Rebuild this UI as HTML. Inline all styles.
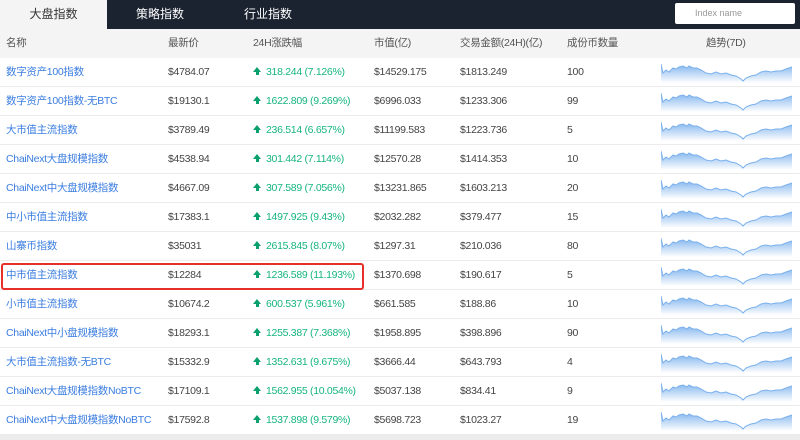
<!DOCTYPE html>
<html><head><meta charset="utf-8"><style>
*{margin:0;padding:0;box-sizing:border-box}
body{width:800px;height:440px;overflow:hidden;background:#fff;font-family:"Liberation Sans","Noto Sans CJK SC",sans-serif;font-size:10.5px;letter-spacing:-0.3px;color:#444;position:relative}
.top{position:absolute;left:0;top:0;width:800px;height:29px;background:#1b2230}
.tab{position:absolute;top:0;height:29px;line-height:29px;font-size:12px;letter-spacing:0;color:#fff;text-align:center}
.tab.act{background:#f4f4f4;color:#333;left:0;width:107px}
.search{position:absolute;left:675px;top:3px;width:120px;height:21px;background:#fff;border-radius:2px;color:#999;font-size:9px;letter-spacing:0;line-height:21px;padding-left:20px}
.hdr{position:absolute;left:0;top:29px;width:800px;height:29px;background:#f4f4f4;color:#555}
.row{position:absolute;left:0;width:800px;height:29px;border-bottom:1px solid #ebebeb}
.c{position:absolute;top:0;line-height:29px;white-space:nowrap}
.n{color:#3a7de0}
.g{color:#16b57f}
.g b{display:inline-block;width:0;height:0;border-left:4px solid transparent;border-right:4px solid transparent;border-bottom:5px solid #0aa06e;position:relative;top:-3px;margin-right:5px}
.g b:after{content:"";position:absolute;left:-1.5px;top:4px;width:3px;height:4px;background:#0aa06e}
svg{position:absolute;left:661px;top:5px}
.red{position:absolute;left:1px;top:263px;width:363px;height:27px;border:2px solid #e8302a;border-radius:3px}
.sb{position:absolute;left:0;top:435px;width:800px;height:5px;background:#ececec}
</style></head><body>
<div class="top"></div>
<div class="tab act">大盘指数</div>
<div class="tab" style="left:110px;width:100px">策略指数</div>
<div class="tab" style="left:218px;width:100px">行业指数</div>
<div class="search">Index name</div>
<div class="hdr">
<div class="c" style="left:6px">名称</div>
<div class="c" style="left:168px">最新价</div>
<div class="c" style="left:253px">24H涨跌幅</div>
<div class="c" style="left:374px">市值(亿)</div>
<div class="c" style="left:460px">交易金额(24H)(亿)</div>
<div class="c" style="left:567px">成份币数量</div>
<div class="c" style="left:706px">趋势(7D)</div>
</div>
<div id="rows"></div>
<div class="red"></div>
<div class="sb"></div>
<script>
var d=[["数字资产100指数","$4784.07","318.244 (7.126%)","$14529.175","$1813.249","100"],
["数字资产100指数-无BTC","$19130.1","1622.809 (9.269%)","$6996.033","$1233.306","99"],
["大市值主流指数","$3789.49","236.514 (6.657%)","$11199.583","$1223.736","5"],
["ChaiNext大盘规模指数","$4538.94","301.442 (7.114%)","$12570.28","$1414.353","10"],
["ChaiNext中大盘规模指数","$4667.09","307.589 (7.056%)","$13231.865","$1603.213","20"],
["中小市值主流指数","$17383.1","1497.925 (9.43%)","$2032.282","$379.477","15"],
["山寨币指数","$35031","2615.845 (8.07%)","$1297.31","$210.036","80"],
["中市值主流指数","$12284","1236.589 (11.193%)","$1370.698","$190.617","5"],
["小市值主流指数","$10674.2","600.537 (5.961%)","$661.585","$188.86","10"],
["ChaiNext中小盘规模指数","$18293.1","1255.387 (7.368%)","$1958.895","$398.896","90"],
["大市值主流指数-无BTC","$15332.9","1352.631 (9.675%)","$3666.44","$643.793","4"],
["ChaiNext大盘规模指数NoBTC","$17109.1","1562.955 (10.054%)","$5037.138","$834.41","9"],
["ChaiNext中大盘规模指数NoBTC","$17592.8","1537.898 (9.579%)","$5698.723","$1023.27","19"]];
var p="0,1 2,10 5,7 8,9 12,5 15,6 18,4 22,3 26,5 28,3 32,5 36,5 40,7 45,10 50,11 55,9 60,11 65,10 70,12 75,13 80,16 82,18 85,15 90,13 95,12 100,9 105,8 110,9 115,8 120,8 125,6 131,4";
var h="";
d.forEach(function(r,i){
h+='<div class="row" style="top:'+(58+i*29)+'px"><div class="c n" style="left:6px">'+r[0]+'</div><div class="c" style="left:168px">'+r[1]+'</div><div class="c g" style="left:253px"><b></b>'+r[2]+'</div><div class="c" style="left:374px">'+r[3]+'</div><div class="c" style="left:460px">'+r[4]+'</div><div class="c" style="left:567px">'+r[5]+'</div>'+
'<svg width="132" height="20"><defs><linearGradient id="g'+i+'" x1="0" y1="0" x2="0" y2="1"><stop offset="0" stop-color="#7fb3ee"/><stop offset="1" stop-color="#fff"/></linearGradient></defs><polygon points="0,20 '+p+' 131,20" fill="url(#g'+i+')"/><polyline points="'+p+'" fill="none" stroke="#7ab0ec" stroke-width="1"/></svg></div>';
});
document.getElementById("rows").innerHTML=h;
</script>
</body></html>
